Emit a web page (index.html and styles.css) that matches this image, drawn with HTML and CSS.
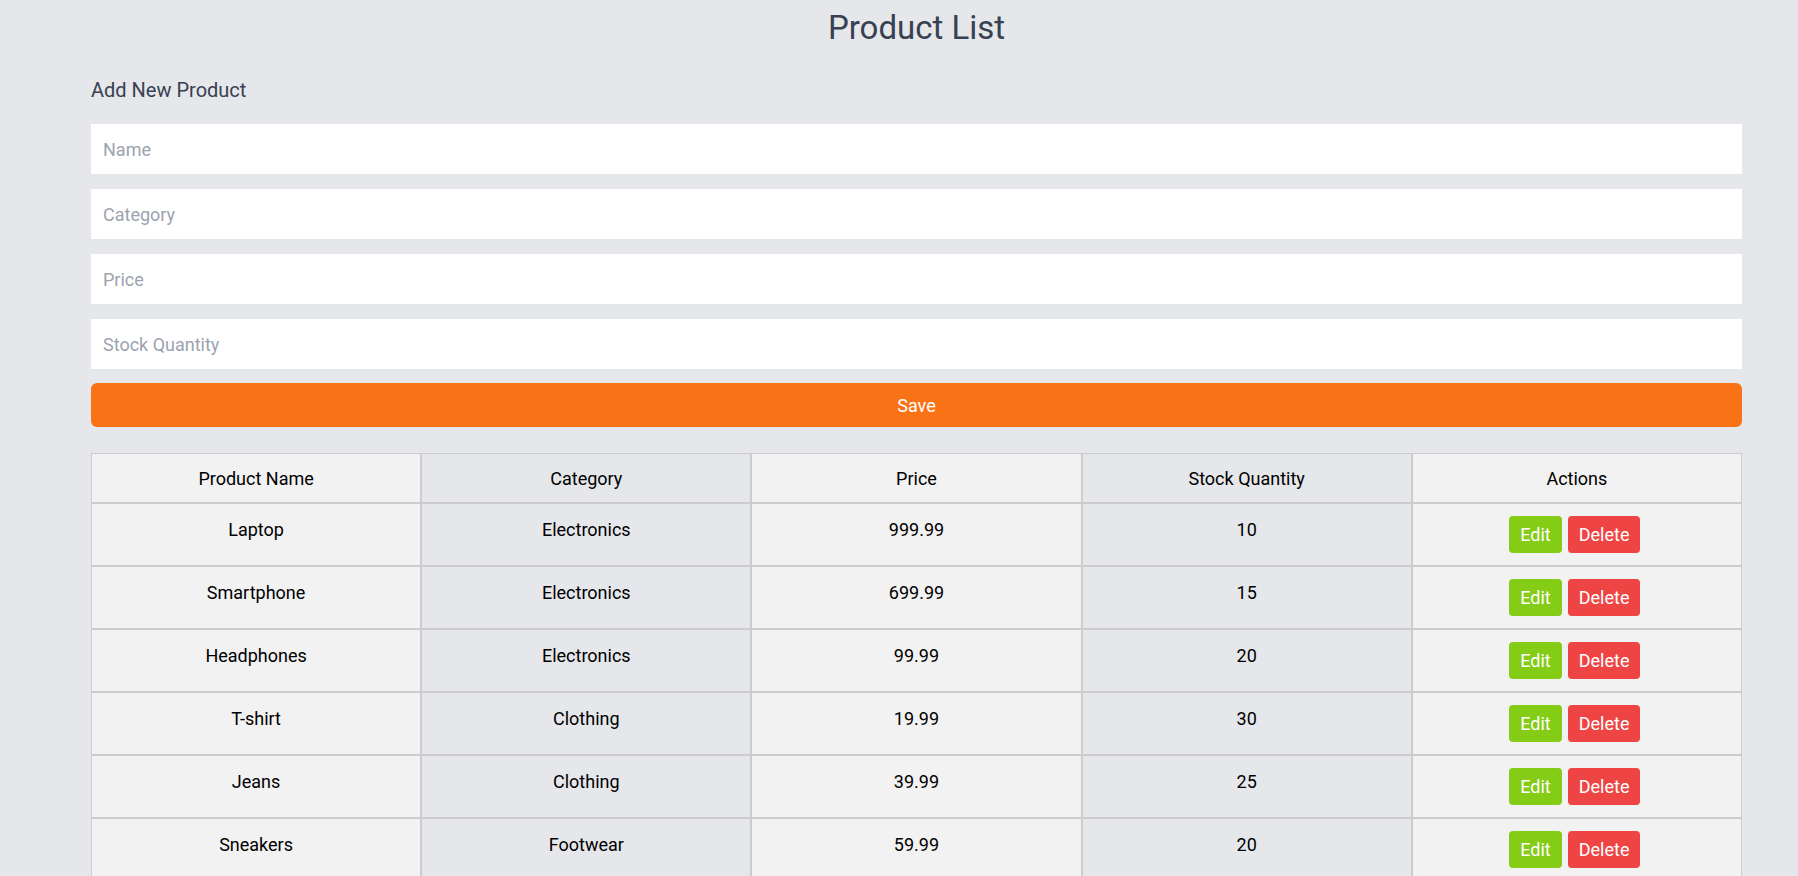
FILE: index.html
```html
<!DOCTYPE html>
<html lang="en">
<head>
<meta charset="utf-8">
<title>Product List</title>
<link rel="stylesheet" href="styles.css">
</head>
<body>
<div class="page">
  <h1 class="title">Product List</h1>
  <h2 class="subtitle">Add New Product</h2>
  <form class="product-form">
    <input class="field" type="text" placeholder="Name">
    <input class="field" type="text" placeholder="Category">
    <input class="field" type="text" placeholder="Price">
    <input class="field" type="text" placeholder="Stock Quantity">
    <button class="save-btn" type="button">Save</button>
  </form>
  <table class="products">
    <thead>
      <tr><th>Product Name</th><th>Category</th><th>Price</th><th>Stock Quantity</th><th>Actions</th></tr>
    </thead>
    <tbody>
      <tr><td>Laptop</td><td>Electronics</td><td>999.99</td><td>10</td><td class="actions"><div class="btns"><button class="btn edit">Edit</button><button class="btn delete">Delete</button></div></td></tr>
      <tr><td>Smartphone</td><td>Electronics</td><td>699.99</td><td>15</td><td class="actions"><div class="btns"><button class="btn edit">Edit</button><button class="btn delete">Delete</button></div></td></tr>
      <tr><td>Headphones</td><td>Electronics</td><td>99.99</td><td>20</td><td class="actions"><div class="btns"><button class="btn edit">Edit</button><button class="btn delete">Delete</button></div></td></tr>
      <tr><td>T-shirt</td><td>Clothing</td><td>19.99</td><td>30</td><td class="actions"><div class="btns"><button class="btn edit">Edit</button><button class="btn delete">Delete</button></div></td></tr>
      <tr><td>Jeans</td><td>Clothing</td><td>39.99</td><td>25</td><td class="actions"><div class="btns"><button class="btn edit">Edit</button><button class="btn delete">Delete</button></div></td></tr>
      <tr><td>Sneakers</td><td>Footwear</td><td>59.99</td><td>20</td><td class="actions"><div class="btns"><button class="btn edit">Edit</button><button class="btn delete">Delete</button></div></td></tr>
    </tbody>
  </table>
</div>
</body>
</html>
```

FILE: styles.css
```css
* { box-sizing: border-box; }

html, body {
  margin: 0;
  padding: 0;
  background: #e5e7eb;
  font-family: Roboto, "Open Sans", "Liberation Sans", sans-serif;
  font-size: 18px;
  color: #000;
}

.page {
  width: 1651px;
  margin-left: 91px;
  padding-top: 8px;
}

.title {
  margin: 0;
  font-size: 33px;
  line-height: 40px;
  font-weight: 400;
  text-align: center;
  color: #374151;
}

.subtitle {
  margin: 28px 0 20px;
  font-size: 20px;
  line-height: 28px;
  font-weight: 400;
  color: #374151;
}

.product-form {
  display: flex;
  flex-direction: column;
  gap: 15px;
  margin: 0 0 26px;
}

.field {
  display: block;
  width: 100%;
  height: 50px;
  padding: 0 12px;
  border: none;
  outline: none;
  background: #fff;
  font-family: inherit;
  font-size: 18px;
  color: #111827;
}

.field::placeholder { color: #9ca3af; }

.save-btn {
  height: 44px;
  margin-top: -1px;
  border: none;
  border-radius: 6px;
  background: #f97316;
  color: #fff;
  font-family: inherit;
  font-size: 18px;
  cursor: pointer;
}

.products {
  width: 100%;
  table-layout: fixed;
  border-collapse: separate;
  border-spacing: 0;
  font-size: 18px;
}

.products th,
.products td {
  border: 1px solid #cccccc;
  text-align: center;
  vertical-align: top;
  font-weight: 400;
  line-height: 24px;
  background: #f2f2f2;
}

.products th { padding: 13px 12px 11px; }
.products td { padding: 14px 12px 11px; }
.products td.actions { padding: 12px 16px 12px 12px; }

.products th:nth-child(even),
.products td:nth-child(even) { background: #e5e7eb; }

.btns {
  display: flex;
  justify-content: center;
  gap: 6px;
}

.btn {
  height: 37px;
  padding: 0 11px;
  border: none;
  border-radius: 4px;
  color: #fff;
  font-family: inherit;
  font-size: 18px;
  line-height: 24px;
  cursor: pointer;
}

.btn.edit { background: #84cc16; }
.btn.delete { background: #ef4444; }
```
